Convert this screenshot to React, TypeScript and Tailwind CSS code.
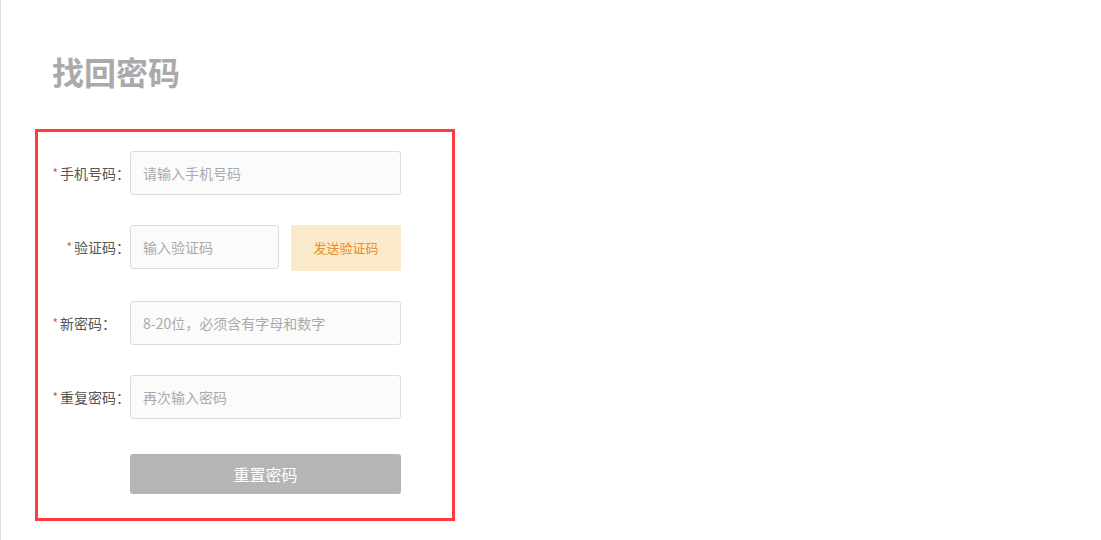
const font = { fontFamily: '"Microsoft YaHei", "Noto Sans CJK SC", "Noto Sans", sans-serif' };

type FieldProps = {
  label: string;
  placeholder: string;
  className?: string;
  labelClassName?: string;
};

function Field({ label, placeholder, className, labelClassName }: FieldProps) {
  return (
    <div className={`flex items-center ${className ?? ''}`}>
      <label
        className={`flex w-[92px] shrink-0 items-center justify-end text-[14px] text-[#555] ${labelClassName ?? 'pr-0'}`}
      >
        <span className="mr-[2px] text-[12px] text-[#f05050]">*</span>
        {label}
      </label>
      <input
        type="text"
        placeholder={placeholder}
        className="h-[44px] w-[271px] rounded-[3px] border border-[#dcdcdc] bg-[#fbfbfb] px-[12px] text-[14px] text-[#333] outline-none placeholder:text-[#aaa]"
      />
    </div>
  );
}

export default function App() {
  return (
    <div className="min-h-[540px] w-full border-l border-[#dddddd] bg-white" style={font}>
      <h1 className="pl-[51px] pt-[51px] text-[32px] font-bold leading-[40px] text-[#aaaaaa]">找回密码</h1>

      <form className="ml-[34px] mt-[38px] w-[420px] border-[3px] border-[#ff3b3b] pb-[24px] pt-[19px]">
        <Field label="手机号码：" placeholder="请输入手机号码" />

        <div className="mt-[30px] flex items-start">
          <label className="flex h-[44px] w-[92px] shrink-0 items-center justify-end text-[14px] text-[#555]">
            <span className="mr-[2px] text-[12px] text-[#f05050]">*</span>
            验证码：
          </label>
          <input
            type="text"
            placeholder="输入验证码"
            className="h-[44px] w-[149px] rounded-[3px] border border-[#dcdcdc] bg-[#fbfbfb] px-[12px] text-[14px] outline-none placeholder:text-[#aaa]"
          />
          <button
            type="button"
            className="ml-[12px] h-[46px] w-[110px] rounded-[2px] bg-[#fae9ca] text-[13px] text-[#f08a1c]"
          >
            发送验证码
          </button>
        </div>

        <Field
          className="mt-[30px]"
          labelClassName="pr-[14px]"
          label="新密码："
          placeholder="8-20位，必须含有字母和数字"
        />
        <Field className="mt-[30px]" label="重复密码：" placeholder="再次输入密码" />

        <div className="mt-[35px] pl-[92px]">
          <button type="button" className="h-[40px] w-[271px] rounded-[3px] bg-[#b5b5b5] text-[16px] text-white">
            重置密码
          </button>
        </div>
      </form>
    </div>
  );
}
